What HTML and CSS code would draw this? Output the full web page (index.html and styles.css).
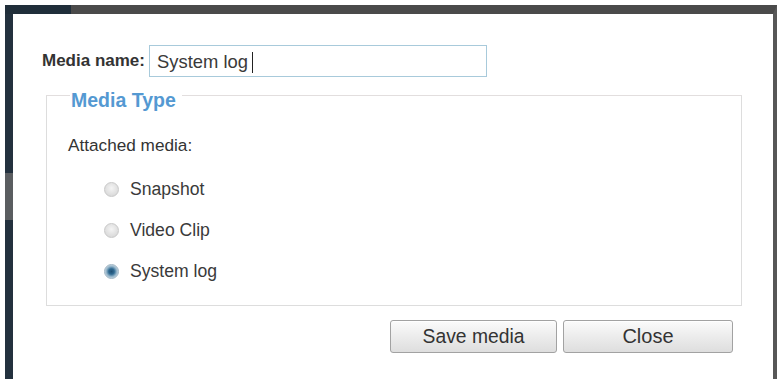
FILE: index.html
```html
<!DOCTYPE html>
<html>
<head>
<meta charset="utf-8">
<link rel="stylesheet" href="styles.css">
</head>
<body>
<div class="frame">
  <div class="content">
    <div class="name-row">
      <label class="name-label" for="mname">Media name:</label>
      <div class="name-input" id="mname"><span class="name-value">System log</span><span class="caret"></span></div>
    </div>
    <fieldset class="media-type">
      <legend class="legend">Media Type</legend>
      <div class="attached">Attached media:</div>
      <div class="options">
        <div class="option"><span class="radio"></span><span class="opt-label">Snapshot</span></div>
        <div class="option"><span class="radio"></span><span class="opt-label">Video Clip</span></div>
        <div class="option"><span class="radio checked"></span><span class="opt-label">System log</span></div>
      </div>
    </fieldset>
    <div class="buttons">
      <button class="btn btn-save">Save media</button>
      <button class="btn btn-close">Close</button>
    </div>
  </div>
</div>
</body>
</html>
```
FILE: styles.css
```css
html, body {
  margin: 0;
  padding: 0;
  background: #ffffff;
  width: 779px;
  height: 379px;
  overflow: hidden;
  font-family: "Liberation Sans", Arial, sans-serif;
  color: #333333;
}

.frame {
  position: relative;
  margin: 5px 2px 0 5px;
  height: 374px;
  box-sizing: border-box;
  border-top: 9px solid #4a4a4a;
  border-left: 8px solid #23313e;
  border-right: 4px solid #575757;
  background: #ffffff;
}

.frame::before {
  content: "";
  position: absolute;
  top: -9px;
  left: -8px;
  width: 66px;
  height: 9px;
  background: #202e3a;
}

.frame::after {
  content: "";
  position: absolute;
  top: 159px;
  left: -8px;
  width: 8px;
  height: 47px;
  background: #5a5d60;
}

.content {
  padding: 31px 31px 0 29px;
}

.name-row {
  display: flex;
  align-items: center;
  gap: 4px;
  height: 32px;
}

.name-label {
  font-weight: bold;
  font-size: 17px;
  color: #333333;
}

.name-input {
  width: 338px;
  height: 32px;
  box-sizing: border-box;
  border: 1px solid #a8cadb;
  display: flex;
  align-items: center;
  padding: 2px 0 0 7px;
  font-size: 18.4px;
  color: #3a3a3a;
  background: #ffffff;
}

.caret {
  display: inline-block;
  width: 1px;
  height: 21px;
  background: #222222;
  margin-left: 4px;
}

.media-type {
  margin: 2px 0 0 4px;
  padding: 0 0 0 21px;
  border: 1px solid #dddddd;
  border-top-color: #e2dede;
  height: 227px;
  box-sizing: border-box;
}

.legend {
  padding: 10px 6px 0 1px;
  margin-left: 2px;
  font-weight: bold;
  font-size: 19.5px;
  color: #5499d2;
  line-height: 22px;
}

.attached {
  font-size: 17.2px;
  margin-top: 24px;
  line-height: 20px;
}

.options {
  display: flex;
  flex-direction: column;
  gap: 21px;
  margin-top: 24px;
  padding-left: 36px;
}

.option {
  display: flex;
  align-items: center;
  height: 20px;
  gap: 11px;
}

.radio {
  width: 13px;
  height: 13px;
  border-radius: 50%;
  border: 1px solid #c9c9c9;
  background: radial-gradient(circle at 50% 40%, #f4f4f4 0%, #dcdcdc 70%, #cfcfcf 100%);
  flex: none;
}

.radio.checked {
  border-color: #9fb5c4;
  background: radial-gradient(circle at 50% 50%, #1f4f73 0%, #2f6a92 30%, #8fb1c7 55%, #d8e2ea 80%);
}

.opt-label {
  font-size: 17.6px;
  color: #3a3a3a;
}

.buttons {
  display: flex;
  justify-content: flex-end;
  gap: 6px;
  margin: 14px 9px 0 0;
}

.btn {
  height: 33px;
  border: 1px solid #a2a2a2;
  border-radius: 3px;
  background: linear-gradient(#fbfbfb, #ececec 50%, #dedede);
  font-family: "Liberation Sans", Arial, sans-serif;
  font-size: 19.3px;
  color: #333333;
  padding: 0;
  box-shadow: inset 0 1px 0 #ffffff;
}

.btn-save {
  width: 167px;
}

.btn-close {
  width: 170px;
  font-size: 20px;
}
```
